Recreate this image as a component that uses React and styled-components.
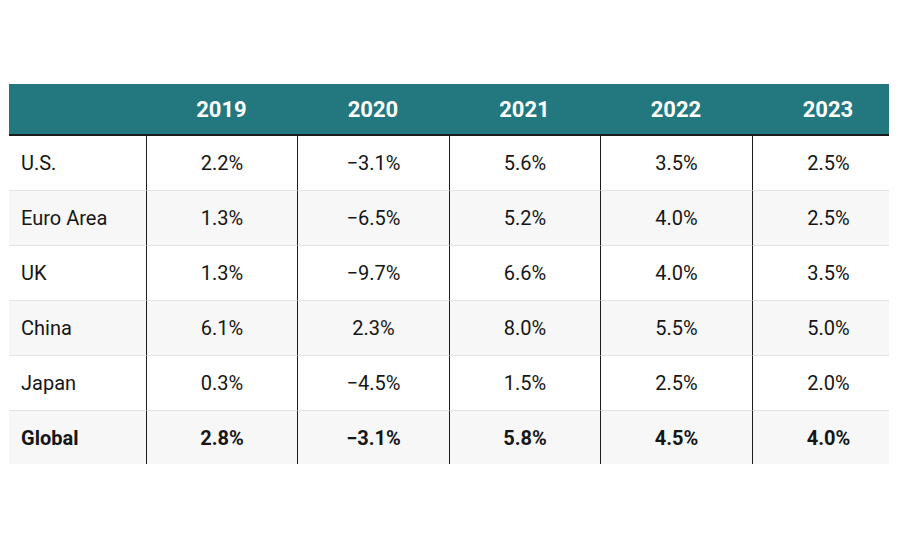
import React from 'react';
import styled, { createGlobalStyle } from 'styled-components';

const GlobalStyle = createGlobalStyle`
    body {
        margin: 0;
        background: #fff;
        font-family: Roboto, "Liberation Sans", sans-serif;
    }
`;

const Page = styled.div`
    width: 900px;
    height: 550px;
    padding: 84px 0 0 9px;
    box-sizing: border-box;
`;

const Table = styled.div`
    width: 880px;
    overflow: hidden;
`;

const Grid = styled.div`
    display: grid;
    grid-template-columns: 137px 151px 152px 151px 152px 152px;
    width: 895px;
`;

const HeadCell = styled.div`
    height: 50px;
    background-color: #23787f;
    border-bottom: 2px solid #1c1c1c;
    color: #fff;
    font-weight: 700;
    font-size: 22px;
    display: flex;
    align-items: center;
    justify-content: center;
`;

const Cell = styled.div`
    height: ${(p) => (p.$last ? '53px' : '54px')};
    background-color: ${(p) => (p.$striped ? '#f7f7f7' : '#fff')};
    border-top: ${(p) => (p.$first ? 'none' : '1px solid #e4e4e4')};
    border-left: ${(p) => (p.$label ? 'none' : '1px solid #1c1c1c')};
    color: #161616;
    font-size: 20px;
    font-weight: ${(p) => (p.$last ? 700 : 400)};
    display: flex;
    align-items: center;
    justify-content: ${(p) => (p.$label ? 'flex-start' : 'center')};
    padding-left: ${(p) => (p.$label ? '12px' : '0')};
`;

const years = ['2019', '2020', '2021', '2022', '2023'];

const rows = [
    ['U.S.', '2.2%', '\u22123.1%', '5.6%', '3.5%', '2.5%'],
    ['Euro Area', '1.3%', '\u22126.5%', '5.2%', '4.0%', '2.5%'],
    ['UK', '1.3%', '\u22129.7%', '6.6%', '4.0%', '3.5%'],
    ['China', '6.1%', '2.3%', '8.0%', '5.5%', '5.0%'],
    ['Japan', '0.3%', '\u22124.5%', '1.5%', '2.5%', '2.0%'],
    ['Global', '2.8%', '\u22123.1%', '5.8%', '4.5%', '4.0%'],
];

export default function App() {
    return (
        <>
            <GlobalStyle />
            <Page>
                <Table>
                    <Grid>
                        <HeadCell />
                        {years.map((y) => (
                            <HeadCell key={y}>{y}</HeadCell>
                        ))}
                        {rows.map((row, r) =>
                            row.map((val, c) => (
                                <Cell
                                    key={r + '-' + c}
                                    $label={c === 0}
                                    $first={r === 0}
                                    $striped={r % 2 === 1}
                                    $last={r === rows.length - 1}
                                >
                                    {val}
                                </Cell>
                            ))
                        )}
                    </Grid>
                </Table>
            </Page>
        </>
    );
}
